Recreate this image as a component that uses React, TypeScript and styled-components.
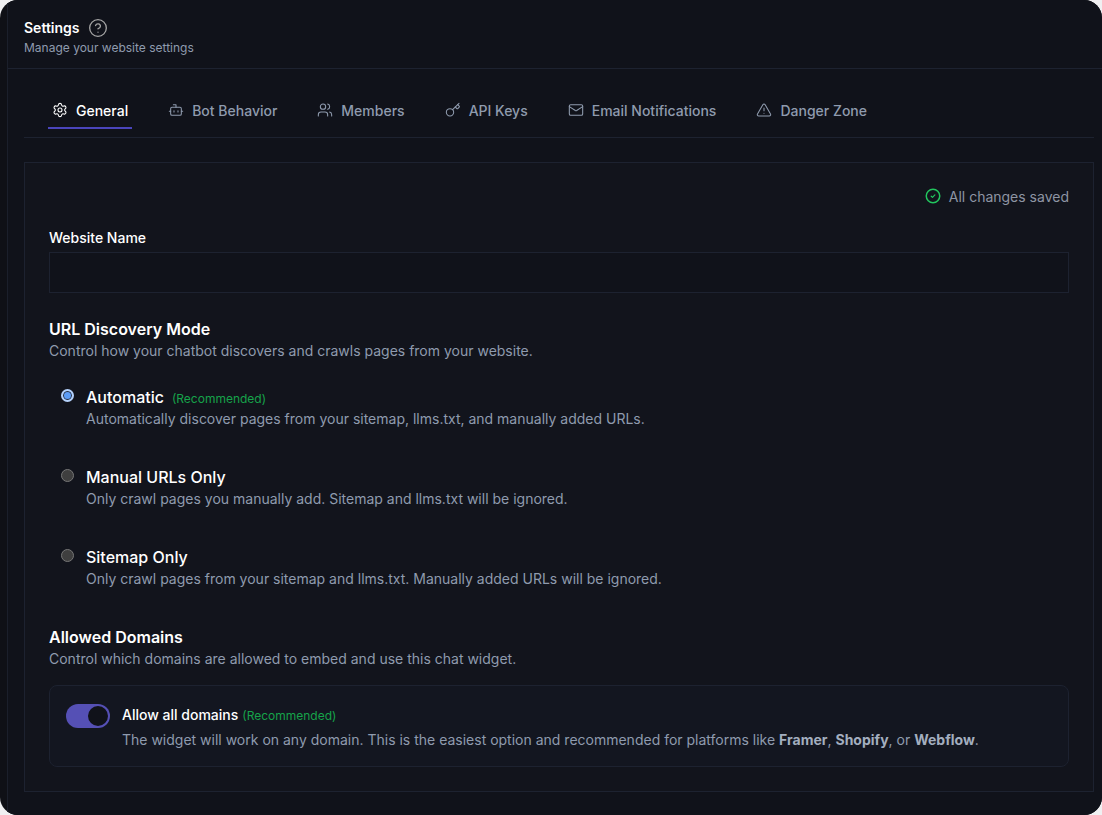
import styled, { createGlobalStyle } from 'styled-components';
import { Bot, CircleHelp, Key, Mail, Settings, TriangleAlert, Users } from 'lucide-react';

const GlobalStyle = createGlobalStyle`
    html, body {
        margin: 0;
        padding: 0;
        background: #f0f0f2;
    }
    * {
        box-sizing: border-box;
    }
`;

const Frame = styled.div`
    width: 1102px;
    height: 815px;
    overflow: hidden;
    border-radius: 18px;
    background: #0f1016;
    padding-left: 7px;
    font-family: Inter, "Liberation Sans", sans-serif;
    color: #ffffff;
`;

const Main = styled.div`
    height: 100%;
    background: #10121a;
    border-left: 1px solid #1b1f2b;
`;

const Header = styled.header`
    height: 69px;
    padding: 18px 16px 0;
    border-bottom: 1px solid #1d2230;
`;

const TitleRow = styled.div`
    display: flex;
    align-items: center;
    gap: 8px;
    height: 20px;
`;

const Title = styled.h1`
    margin: 0;
    font-size: 14px;
    line-height: 20px;
    font-weight: 600;
`;

const Subtitle = styled.p`
    margin: 2px 0 0;
    font-size: 12px;
    line-height: 16px;
    color: #8f9bae;
`;

const Tabs = styled.nav`
    display: flex;
    gap: 32px;
    height: 69px;
    margin: 0 8px 0 16px;
    padding: 24px 0 0 24px;
    border-bottom: 1px solid #1d2230;
`;

const Tab = styled.div<{ $active?: boolean }>`
    display: flex;
    align-items: center;
    gap: 8px;
    height: 36px;
    padding: 0 4px;
    font-size: 14px;
    font-weight: 500;
    color: ${(p) => (p.$active ? '#ffffff' : '#8f9bae')};
    border-bottom: 2px solid ${(p) => (p.$active ? '#4a45bc' : 'transparent')};
`;

const Card = styled.section`
    height: 630px;
    margin: 24px 8px 0 16px;
    padding: 23px 24px 24px;
    background: #12141c;
    border: 1px solid #1d2230;
`;

const SaveStatus = styled.div`
    display: flex;
    justify-content: flex-end;
    align-items: center;
    gap: 8px;
    height: 20px;
    font-size: 14px;
    color: #8e95a3;
`;

const FieldLabel = styled.label`
    display: block;
    margin-top: 22px;
    font-size: 14px;
    line-height: 20px;
    font-weight: 500;
`;

const TextInput = styled.input`
    display: block;
    width: 100%;
    height: 41px;
    margin-top: 4px;
    background: #10121a;
    border: 1px solid #1d2230;
    outline: none;
`;

const SectionTitle = styled.h2<{ $top: number }>`
    margin: ${(p) => p.$top}px 0 0;
    font-size: 16px;
    line-height: 24px;
    font-weight: 600;
`;

const SectionText = styled.p`
    margin: 0;
    font-size: 14px;
    line-height: 20px;
    color: #8f9bae;
`;

const RadioList = styled.div`
    display: flex;
    flex-direction: column;
    gap: 32px;
    margin-top: 24px;
    padding-left: 12px;
`;

const RadioRow = styled.div`
    display: flex;
    gap: 12px;
    height: 48px;
`;

const RadioDot = styled.span<{ $checked?: boolean }>`
    flex: none;
    width: 13px;
    height: 13px;
    margin-top: 4px;
    border-radius: 50%;
    background: ${(p) => (p.$checked ? '#5b9cf6' : '#3f3f3f')};
    border: ${(p) => (p.$checked ? '2px solid #b5d2fb' : '1px solid #767676')};
    box-shadow: ${(p) => (p.$checked ? 'inset 0 0 0 1px #2a2f3d' : 'none')};
`;

const RadioBody = styled.div`
    display: flex;
    flex-direction: column;
`;

const RadioLabel = styled.div`
    display: flex;
    align-items: center;
    gap: 8px;
    height: 24px;
    font-size: 16px;
    font-weight: 500;
`;

const RadioText = styled.div`
    font-size: 14px;
    line-height: 20px;
    color: #8f9bae;
`;

const Recommended = styled.span`
    margin-top: 2px;
    font-size: 12px;
    font-weight: 400;
    color: #16a34a;
`;

const DomainBox = styled.div`
    display: flex;
    gap: 12px;
    height: 82px;
    margin-top: 16px;
    padding: 18px 16px;
    background: #131620;
    border: 1px solid #1d2230;
    border-radius: 8px;
`;

const Toggle = styled.div`
    flex: none;
    display: flex;
    justify-content: flex-end;
    align-items: center;
    width: 44px;
    height: 24px;
    padding-right: 2px;
    border-radius: 12px;
    background: #5550b5;
`;

const Knob = styled.span`
    width: 20px;
    height: 20px;
    border-radius: 50%;
    background: #10121a;
`;

const DomainBody = styled.div`
    display: flex;
    flex-direction: column;
    gap: 7px;
    padding-top: 2px;
`;

const DomainTitle = styled.div`
    display: flex;
    align-items: center;
    gap: 4px;
    height: 20px;
    font-size: 14px;
    font-weight: 500;
`;

const DomainText = styled.p`
    margin: 0;
    font-size: 14px;
    line-height: 20px;
    color: #8f9bae;

    strong {
        font-weight: 700;
        color: #a3aebf;
    }
`;

const SavedIcon = () => (
    <svg width="16" height="16" viewBox="0 0 16 16" fill="none" stroke="#22c55e" strokeLinecap="round" strokeLinejoin="round">
        <circle cx="8" cy="8" r="6.75" strokeWidth="1.5" />
        <path d="M6.2 8.2l1.3 1.2 2.4-2.5" strokeWidth="1.2" />
    </svg>
);

const tabs = [
    { label: 'General', icon: Settings },
    { label: 'Bot Behavior', icon: Bot },
    { label: 'Members', icon: Users },
    { label: 'API Keys', icon: Key },
    { label: 'Email Notifications', icon: Mail },
    { label: 'Danger Zone', icon: TriangleAlert },
];

const modes = [
    {
        label: 'Automatic',
        text: 'Automatically discover pages from your sitemap, llms.txt, and manually added URLs.',
        checked: true,
    },
    {
        label: 'Manual URLs Only',
        text: 'Only crawl pages you manually add. Sitemap and llms.txt will be ignored.',
    },
    {
        label: 'Sitemap Only',
        text: 'Only crawl pages from your sitemap and llms.txt. Manually added URLs will be ignored.',
    },
];

const App = () => {
    return (
        <>
            <GlobalStyle />
            <Frame>
                <Main>
                    <Header>
                        <TitleRow>
                            <Title>Settings</Title>
                            <CircleHelp size={20} strokeWidth={1.6} color="#a3a3a3" />
                        </TitleRow>
                        <Subtitle>Manage your website settings</Subtitle>
                    </Header>

                    <Tabs>
                        {tabs.map(({ label, icon: Icon }, i) => (
                            <Tab key={label} $active={i === 0}>
                                <Icon size={16} strokeWidth={1.6} />
                                {label}
                            </Tab>
                        ))}
                    </Tabs>

                    <Card>
                        <SaveStatus>
                            <SavedIcon />
                            All changes saved
                        </SaveStatus>

                        <FieldLabel>Website Name</FieldLabel>
                        <TextInput />

                        <SectionTitle $top={24}>URL Discovery Mode</SectionTitle>
                        <SectionText>Control how your chatbot discovers and crawls pages from your website.</SectionText>

                        <RadioList>
                            {modes.map((mode) => (
                                <RadioRow key={mode.label}>
                                    <RadioDot $checked={mode.checked} />
                                    <RadioBody>
                                        <RadioLabel>
                                            {mode.label}
                                            {mode.checked && <Recommended>(Recommended)</Recommended>}
                                        </RadioLabel>
                                        <RadioText>{mode.text}</RadioText>
                                    </RadioBody>
                                </RadioRow>
                            ))}
                        </RadioList>

                        <SectionTitle $top={32}>Allowed Domains</SectionTitle>
                        <SectionText>Control which domains are allowed to embed and use this chat widget.</SectionText>

                        <DomainBox>
                            <Toggle>
                                <Knob />
                            </Toggle>
                            <DomainBody>
                                <DomainTitle>
                                    Allow all domains
                                    <Recommended>(Recommended)</Recommended>
                                </DomainTitle>
                                <DomainText>
                                    The widget will work on any domain. This is the easiest option and recommended for
                                    platforms like <strong>Framer</strong>, <strong>Shopify</strong>, or{' '}
                                    <strong>Webflow</strong>.
                                </DomainText>
                            </DomainBody>
                        </DomainBox>
                    </Card>
                </Main>
            </Frame>
        </>
    );
};

export default App;
